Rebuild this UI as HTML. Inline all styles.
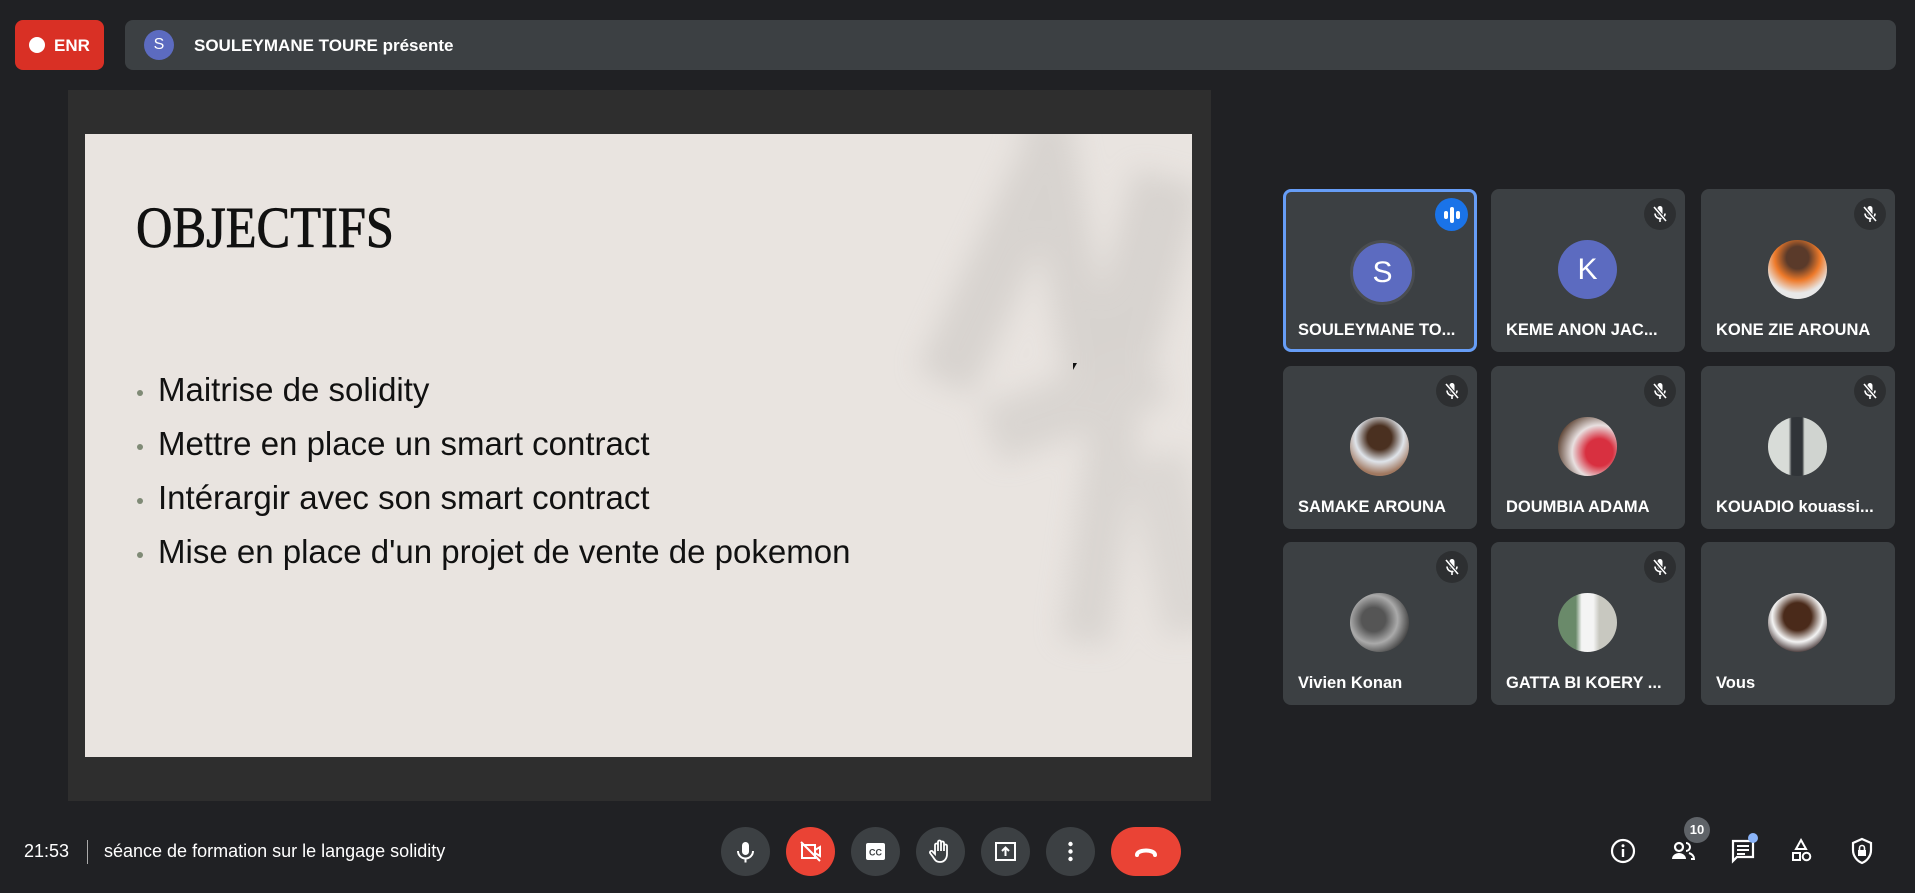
<!DOCTYPE html>
<html><head><meta charset="utf-8"><style>
*{box-sizing:border-box;margin:0;padding:0}
body{width:1915px;height:893px;background:#202124;font-family:"Liberation Sans",sans-serif;position:relative;overflow:hidden;color:#fff}
.abs{position:absolute}
.tile{position:absolute;width:194px;height:163px;background:#3c4043;border-radius:8px}
.av{position:absolute;left:67px;top:51px;width:59px;height:59px;border-radius:50%}
.nm{position:absolute;left:15px;top:132px;font-size:16.5px;font-weight:bold;white-space:nowrap;color:#fff}
.mute{position:absolute;right:9px;top:9px;width:32px;height:32px;border-radius:50%;background:#2d2f31}
.btn{position:absolute;top:827px;width:49px;height:49px;border-radius:50%;background:#3c4043}
.bullet{position:absolute;left:137px;font-size:33px;color:#111;white-space:nowrap}
.bullet::before{content:"";position:absolute;left:0;top:19px;width:6px;height:6px;border-radius:50%;background:#7f8a76}
.bullet span{margin-left:21px}
</style></head><body>
<svg width="0" height="0" style="position:absolute"><defs><symbol id="mo" viewBox="0 0 32 32"><rect x="13.5" y="8" width="5" height="10" rx="2.5" fill="#fff"/><path d="M11 15.5a5 5 0 0 0 10 0M16 21v3" stroke="#fff" stroke-width="1.6" fill="none"/><path d="M10 9l12 14" stroke="#2d2f31" stroke-width="3.5"/><path d="M10 9l12 14" stroke="#fff" stroke-width="1.6"/></symbol></defs></svg>
<div class="abs" style="left:15px;top:20px;width:89px;height:50px;background:#d93025;border-radius:8px">
 <div class="abs" style="left:14px;top:17px;width:16px;height:16px;border-radius:50%;background:#fff"></div>
 <div class="abs" style="left:39px;top:16px;font-size:17px;font-weight:bold">ENR</div>
</div>
<div class="abs" style="left:125px;top:20px;width:1771px;height:50px;background:#3c4043;border-radius:8px">
 <div class="abs" style="left:19px;top:10px;width:30px;height:30px;border-radius:50%;background:#5c6bc0;font-size:16px;text-align:center;line-height:30px">S</div>
 <div class="abs" style="left:69px;top:16px;font-size:17px;font-weight:bold">SOULEYMANE TOURE présente</div>
</div>
<div class="abs" style="left:68px;top:90px;width:1143px;height:711px;background:#2e2e2e"></div>
<div class="abs" style="left:85px;top:134px;width:1107px;height:623px;background:#e9e4e0;overflow:hidden">
 <div class="abs" style="left:820px;top:-20px;width:320px;height:560px;filter:blur(14px);opacity:.35">
  <div class="abs" style="left:60px;top:40px;width:60px;height:240px;background:#b8b5b1;transform:rotate(25deg)"></div>
  <div class="abs" style="left:140px;top:0;width:50px;height:300px;background:#b8b5b1;transform:rotate(-10deg)"></div>
  <div class="abs" style="left:200px;top:60px;width:70px;height:220px;background:#b8b5b1;transform:rotate(15deg)"></div>
  <div class="abs" style="left:80px;top:260px;width:180px;height:60px;background:#bdbab6;transform:rotate(-20deg)"></div>
  <div class="abs" style="left:170px;top:300px;width:50px;height:230px;background:#bdbab6;transform:rotate(8deg)"></div>
  <div class="abs" style="left:240px;top:340px;width:60px;height:180px;background:#c3c0bc;transform:rotate(-12deg)"></div>
 </div>
 <div class="abs" style="left:51px;top:60px;font-family:'Liberation Serif',serif;font-size:58px;color:#111;transform:scaleX(0.87);transform-origin:left top;white-space:nowrap;-webkit-text-stroke:0.8px #111">OBJECTIFS</div>
</div>
<div class="bullet" style="top:371px"><span>Maitrise de solidity</span></div>
<div class="bullet" style="top:425px"><span>Mettre en place un smart contract</span></div>
<div class="bullet" style="top:479px"><span>Intérargir avec son smart contract</span></div>
<div class="bullet" style="top:533px"><span>Mise en place d'un projet de vente de pokemon</span></div>
<div class="abs" style="left:1073px;top:363px;width:0;height:0;border-left:4px solid #111;border-bottom:7px solid transparent;border-top:0"></div>

<div class="tile" style="left:1283px;top:189px;border:3px solid #669df6">
 <div class="abs" style="left:64px;top:48px;width:65px;height:65px;border-radius:50%;background:#5c6bc0;border:3px solid #4a4d50;font-size:30px;text-align:center;line-height:59px">S</div>
 <div class="abs" style="right:6px;top:6px;width:33px;height:33px;border-radius:50%;background:#1a73e8">
  <div class="abs" style="left:9px;top:13px;width:4px;height:8px;border-radius:2px;background:#fff"></div>
  <div class="abs" style="left:15px;top:9px;width:4px;height:16px;border-radius:2px;background:#fff"></div>
  <div class="abs" style="left:21px;top:13px;width:4px;height:8px;border-radius:2px;background:#fff"></div>
 </div>
 <div class="nm" style="left:12px;top:129px">SOULEYMANE TO...</div>
</div>
<div class="tile" style="left:1491px;top:189px"><svg class="mute"><use href="#mo"/></svg><div class="av" style="background:#5c6bc0;font-size:30px;text-align:center;line-height:59px">K</div><div class="nm">KEME ANON JAC...</div></div>
<div class="tile" style="left:1701px;top:189px"><svg class="mute"><use href="#mo"/></svg><div class="av" style="background:radial-gradient(circle at 50% 30%,#5a3a2a 22%,#ee7a2a 45%,#e8e8e8 70%)"></div><div class="nm">KONE ZIE AROUNA</div></div>
<div class="tile" style="left:1283px;top:366px"><svg class="mute"><use href="#mo"/></svg><div class="av" style="background:radial-gradient(circle at 50% 35%,#4a3020 25%,#dfe4ea 50%,#a07860 75%)"></div><div class="nm">SAMAKE AROUNA</div></div>
<div class="tile" style="left:1491px;top:366px"><svg class="mute"><use href="#mo"/></svg><div class="av" style="background:radial-gradient(circle at 70% 60%,#d83040 25%,#e8e0e0 50%,#5a4030 80%)"></div><div class="nm">DOUMBIA ADAMA</div></div>
<div class="tile" style="left:1701px;top:366px"><svg class="mute"><use href="#mo"/></svg><div class="av" style="background:linear-gradient(90deg,#d8dcd8 35%,#303438 40%,#303438 58%,#d0d4d0 62%)"></div><div class="nm">KOUADIO kouassi...</div></div>
<div class="tile" style="left:1283px;top:542px"><svg class="mute"><use href="#mo"/></svg><div class="av" style="background:radial-gradient(circle at 40% 45%,#555 25%,#aaa 50%,#333 80%)"></div><div class="nm">Vivien Konan</div></div>
<div class="tile" style="left:1491px;top:542px"><svg class="mute"><use href="#mo"/></svg><div class="av" style="background:linear-gradient(90deg,#6a8a6a 30%,#f4f4f4 40%,#f4f4f4 60%,#c8c8c0 70%)"></div><div class="nm">GATTA BI KOERY ...</div></div>
<div class="tile" style="left:1701px;top:542px"><div class="av" style="background:radial-gradient(circle at 50% 40%,#4a2a1a 30%,#f4f4f4 55%,#3a2a2a 80%)"></div><div class="nm">Vous</div></div>

<div class="abs" style="left:24px;top:841px;font-size:18px">21:53</div>
<div class="abs" style="left:87px;top:840px;width:1px;height:24px;background:#aaa"></div>
<div class="abs" style="left:104px;top:841px;font-size:18px">séance de formation sur le langage solidity</div>
<div class="btn" style="left:721px"><svg width="49" height="49" viewBox="0 0 49 49"><rect x="21" y="15" width="7" height="13" rx="3.5" fill="#fff"/><path d="M17 24a7.5 7.5 0 0 0 15 0M24.5 31.5v4" stroke="#fff" stroke-width="2" fill="none"/></svg></div>
<div class="btn" style="left:786px;background:#ea4335"><svg width="49" height="49" viewBox="0 0 49 49"><rect x="16" y="18" width="13" height="13" stroke="#fff" stroke-width="2" fill="none"/><path d="M29 23l5-3v9l-5-3M15 15l19 19" stroke="#fff" stroke-width="2" fill="none"/></svg></div>
<div class="btn" style="left:851px"><svg width="49" height="49" viewBox="0 0 49 49"><rect x="15" y="16" width="19" height="17" rx="2" fill="#fff"/><text x="24.5" y="28.5" font-size="9" font-weight="bold" fill="#3c4043" text-anchor="middle" font-family="Liberation Sans">CC</text></svg></div>
<div class="btn" style="left:916px"><svg width="49" height="49" viewBox="0 0 49 49"><path d="M19 27v-9a1.5 1.5 0 0 1 3 0v6-9a1.5 1.5 0 0 1 3 0v9-8a1.5 1.5 0 0 1 3 0v8-5a1.5 1.5 0 0 1 3 0v8c0 5-3 8-7 8s-5-2-7-5l-3-4a1.5 1.5 0 0 1 3-1z" stroke="#fff" stroke-width="1.8" fill="none"/></svg></div>
<div class="btn" style="left:981px"><svg width="49" height="49" viewBox="0 0 49 49"><rect x="15" y="16" width="19" height="17" stroke="#fff" stroke-width="2" fill="none"/><path d="M24.5 29v-8M21 24l3.5-3.5 3.5 3.5" stroke="#fff" stroke-width="2" fill="none"/></svg></div>
<div class="btn" style="left:1046px"><svg width="49" height="49" viewBox="0 0 49 49"><circle cx="24.5" cy="17" r="2.2" fill="#fff"/><circle cx="24.5" cy="24.5" r="2.2" fill="#fff"/><circle cx="24.5" cy="32" r="2.2" fill="#fff"/></svg></div>
<div class="btn" style="left:1111px;width:70px;border-radius:25px;background:#ea4335"><svg width="70" height="49" viewBox="0 0 70 49"><path d="M26 28c0-6 18-6 18 0" stroke="#fff" stroke-width="4" fill="none" stroke-linecap="round"/></svg></div>

<svg class="abs" style="left:1608px;top:836px" width="30" height="30" viewBox="0 0 30 30"><circle cx="15" cy="15" r="11" stroke="#fff" stroke-width="2.2" fill="none"/><rect x="13.8" y="13" width="2.4" height="8" fill="#fff"/><circle cx="15" cy="9.8" r="1.5" fill="#fff"/></svg>
<svg class="abs" style="left:1668px;top:836px" width="30" height="30" viewBox="0 0 30 30"><circle cx="11" cy="11" r="4" stroke="#fff" stroke-width="2.2" fill="none"/><path d="M4 23c0-4 4-6 7-6s7 2 7 6z" fill="#fff"/><path d="M18 7a4 4 0 0 1 0 8M21 17c3 1 5 3 5 6h-3" stroke="#fff" stroke-width="2" fill="none"/></svg>
<div class="abs" style="left:1684px;top:817px;width:26px;height:26px;border-radius:13px;background:#5f6368;font-size:13px;font-weight:bold;text-align:center;line-height:26px">10</div>
<svg class="abs" style="left:1728px;top:836px" width="30" height="30" viewBox="0 0 30 30"><path d="M5 5h20v16H9l-4 4z" stroke="#fff" stroke-width="2.2" fill="none"/><path d="M9 10h12M9 14h12M9 18h8" stroke="#fff" stroke-width="2"/></svg>
<div class="abs" style="left:1748px;top:833px;width:10px;height:10px;border-radius:50%;background:#8ab4f8"></div>
<svg class="abs" style="left:1786px;top:836px" width="30" height="30" viewBox="0 0 30 30"><path d="M15 4l5 9H10z" stroke="#fff" stroke-width="2" fill="none"/><rect x="7" y="17" width="7" height="7" stroke="#fff" stroke-width="2" fill="none"/><circle cx="20.5" cy="20.5" r="3.8" stroke="#fff" stroke-width="2" fill="none"/></svg>
<svg class="abs" style="left:1847px;top:836px" width="30" height="30" viewBox="0 0 30 30"><path d="M15 3l9 4v7c0 6-4 11-9 13-5-2-9-7-9-13V7z" stroke="#fff" stroke-width="2.2" fill="none"/><rect x="11" y="14" width="8" height="6" fill="#fff"/><path d="M12.5 14v-2a2.5 2.5 0 0 1 5 0v2" stroke="#fff" stroke-width="1.6" fill="none"/></svg>
</body></html>
